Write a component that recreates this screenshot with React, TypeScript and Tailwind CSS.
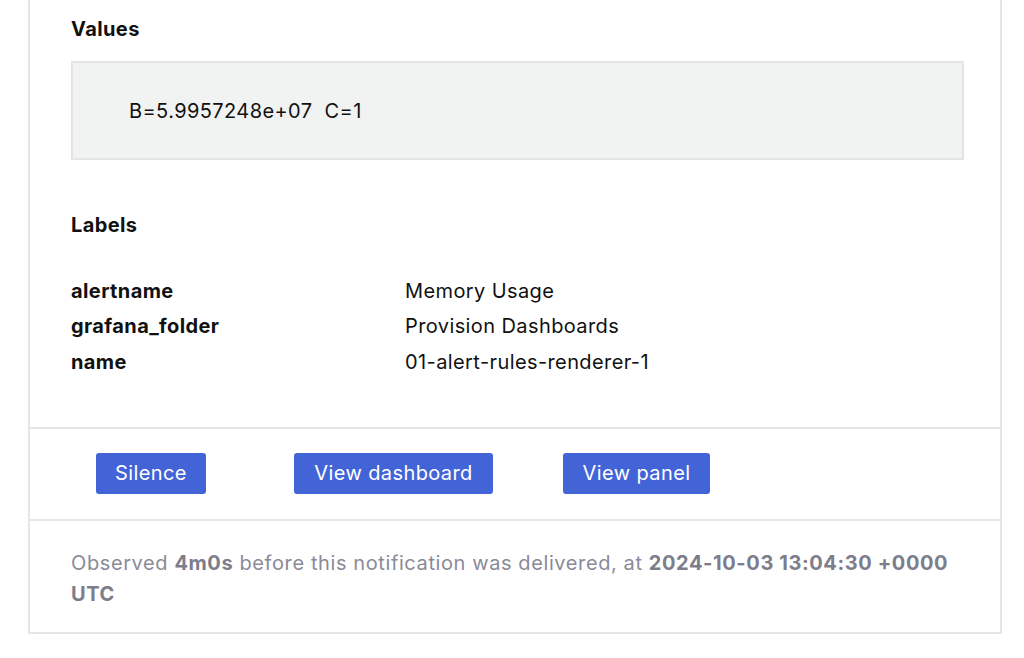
export default function App() {
  const labels: [string, string][] = [
    ["alertname", "Memory Usage"],
    ["grafana_folder", "Provision Dashboards"],
    ["name", "01-alert-rules-renderer-1"],
  ];

  return (
    <div
      className="h-[658px] w-[1024px] overflow-hidden bg-white pl-[28px] text-[#111111] tracking-[0.4px]"
      style={{ fontFamily: "Inter, 'Liberation Sans', sans-serif" }}
    >
      <div className="w-[974px] border-2 border-t-0 border-[#e6e6e6]">
        {/* values + labels */}
        <div className="pl-[41px] pt-[17px] pb-[47px]">
          <h3 className="text-[20px] font-bold leading-[24px]">Values</h3>
          <div className="mt-[20px] flex h-[99px] w-[893px] items-center border-2 border-[#e3e4e4] bg-[#f1f2f2] pl-[56px] text-[20px]">
            <span className="whitespace-pre">B=5.9957248e+07  C=1</span>
          </div>

          <h3 className="mt-[53px] text-[20px] font-bold leading-[24px]">Labels</h3>
          <div className="mt-[36px] flex flex-col">
            {labels.map(([k, v]) => (
              <div key={k} className="flex h-[35.5px] items-center text-[20px]">
                <span className="w-[334px] font-bold">{k}</span>
                <span>{v}</span>
              </div>
            ))}
          </div>
        </div>

        {/* actions */}
        <div className="flex h-[94px] items-center border-y-2 border-[#e6e6e6] pl-[66px] pb-[1px]">
          <button className="h-[41px] w-[110px] rounded-[3px] bg-[#4264d7] text-[20px] text-white">
            Silence
          </button>
          <button className="ml-[88px] h-[41px] w-[199px] rounded-[3px] bg-[#4264d7] text-[20px] text-white">
            View dashboard
          </button>
          <button className="ml-[70px] h-[41px] w-[147px] rounded-[3px] bg-[#4264d7] text-[20px] text-white">
            View panel
          </button>
        </div>

        {/* footer */}
        <div className="pl-[41px] pr-[50px] pt-[27px] pb-[22px] text-[20px] leading-[31px] tracking-[0.6px] text-[#8a8a98]">
          Observed <b className="text-[#7d7d8b]">4m0s</b> before this notification was delivered, at{" "}
          <b className="text-[#7d7d8b]">2024-10-03 13:04:30 +0000 UTC</b>
        </div>
      </div>
    </div>
  );
}
